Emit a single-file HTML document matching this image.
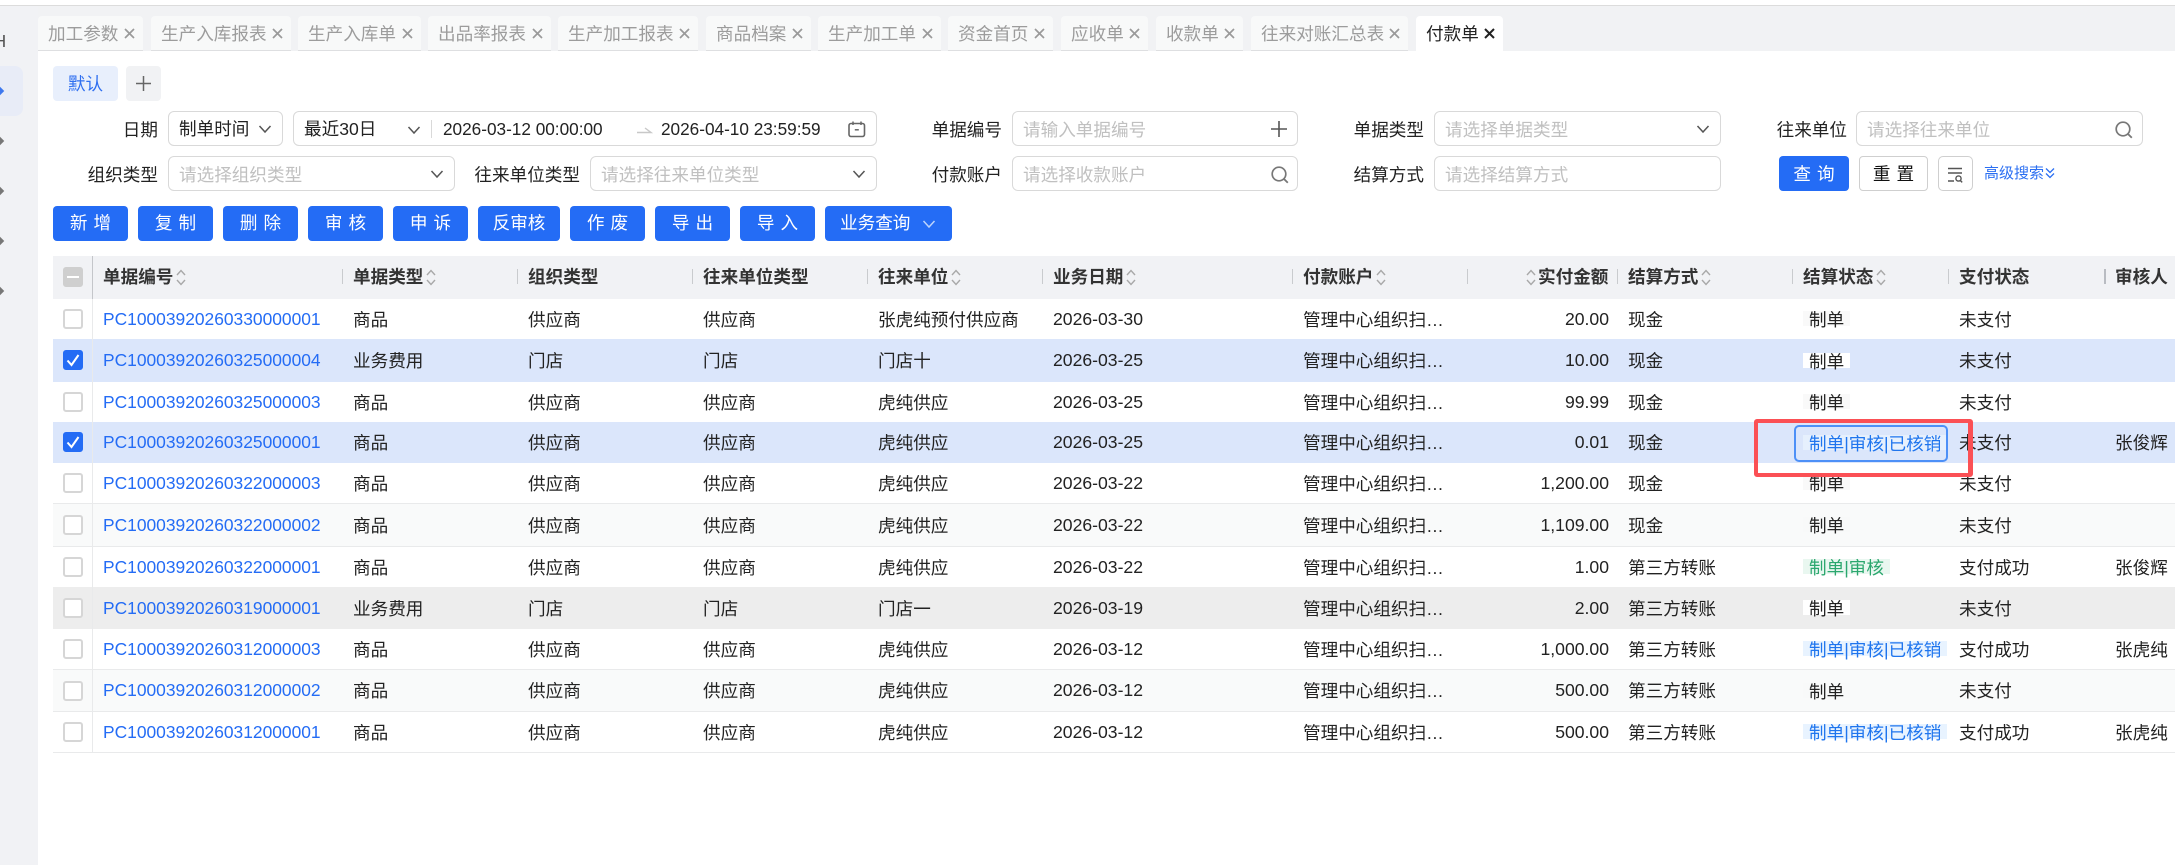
<!DOCTYPE html>
<html lang="zh-CN"><head><meta charset="utf-8"><title>付款单</title>
<style>
*{box-sizing:border-box;margin:0;padding:0}
html,body{width:2175px;height:865px;overflow:hidden;background:#fff}
body{position:relative;font-family:"Liberation Sans","Noto Sans CJK SC",sans-serif;font-size:17.6px;color:#222}
.a{position:absolute;white-space:nowrap}
.tab{position:absolute;top:16px;height:35px;background:#f8f9f9;border-bottom:1px solid #dedfe1;border-radius:4px 4px 0 0;color:#9c9c9c;line-height:36px;padding-left:10px;white-space:nowrap}
.tab i{position:absolute;right:8px;top:12px;width:11px;height:11px}
.tab.on{background:#fff;color:#222;border:0}
.lb{position:absolute;text-align:right;height:35px;line-height:38px;white-space:nowrap}
.bx{position:absolute;height:35px;border:1px solid #d9d9d9;border-radius:6px;background:#fff;line-height:35px;padding-left:10px;white-space:nowrap}
.ph{color:#c0c0c0;line-height:37px}
.bt{position:absolute;top:206px;height:35px;background:#246cf5;color:#fff;border-radius:4px;text-align:center;line-height:35px;letter-spacing:6px;padding-left:6px;white-space:nowrap}
.hd{position:absolute;left:53px;top:256px;width:2122px;height:43px;background:#f1f2f5}
.h{position:absolute;top:256px;height:43px;line-height:42px;font-weight:bold;color:#333;white-space:nowrap}
.d{position:absolute;top:269px;width:1px;height:15px;background:#c9cbce}
.r{position:absolute;left:53px;width:2122px;border-bottom:1px solid #e9eaeb;background:#fff}
.r span{position:absolute;top:0;height:100%;white-space:nowrap;display:flex;align-items:center}
.sel{background:#dbe6fb;border-bottom:0}
.alt{background:#f9fafa}
.hov{background:#ededed;border-bottom:0}
.c1{left:50px;color:#246cf5;font-size:17.4px}
.c2{left:300px}.c3{left:475px}.c4{left:650px}.c5{left:825px}.c6{left:1000px}.c7{left:1250px}
.c8{right:566px;text-align:right}
.c9{left:1575px}.c11{left:1906px}.c12{left:2062px}
.r .tg{position:absolute;left:1750px;top:50%;height:15px;margin-top:-8px;padding:0 6px;background:#f9f9f9;line-height:18px;align-items:flex-start}
.r.sel .tg,.r.hov .tg{background:#fff}
.r.alt .tg{background:#f8f9f9}
.r .tb,.r.sel .tb{background:#e8f3ff;color:#1f75ee}
.r.sel .tb{background:#e6f0fd}
.r .tv{background:#e9f7f0;color:#2ba76e}
.cb{position:absolute;left:10px;width:20px;height:20px;border:2px solid #d6d6d6;border-radius:3px;background:#fff}
.cb.on{background:#246cf5;border-color:#246cf5}
.cb svg{position:absolute;left:0;top:0}
svg{display:block}
</style></head><body>
<svg width="0" height="0" style="position:absolute"><defs>
<symbol id="sort" viewBox="0 0 10 17"><path d="M1 6L5 1.500 9 6M1 11L5 15.500 9 11" fill="none" stroke="#a8a8a8" stroke-width="1.400"/></symbol>
<symbol id="chev" viewBox="0 0 14 10"><path d="M1.500 2L7 8 12.500 2" fill="none" stroke="#555" stroke-width="1.500"/></symbol>
<symbol id="mag" viewBox="0 0 20 22"><circle cx="9" cy="10" r="6.800" fill="none" stroke="#777" stroke-width="1.700"/><path d="M14 15l3.800 3.800" stroke="#777" stroke-width="1.800"/></symbol>
<symbol id="x" viewBox="0 0 11 11"><path d="M1 1L10 10M10 1L1 10" stroke="#9a9a9a" stroke-width="1.700"/></symbol>
<symbol id="xk" viewBox="0 0 11 11"><path d="M1 1L10 10M10 1L1 10" stroke="#222" stroke-width="2"/></symbol>
<symbol id="ck" viewBox="0 0 16 16"><path d="M2.500 8.500L6.500 13 13.500 3" fill="none" stroke="#fff" stroke-width="2"/></symbol>
</defs></svg>

<!-- page chrome -->
<div class="a" style="left:0;top:0;width:2175px;height:5px;background:#fff"></div>
<div class="a" style="left:0;top:5px;width:2175px;height:46px;background:#f1f2f4;border-top:1px solid #dcdcdc"></div>
<div class="a" style="left:0;top:5px;width:38px;height:860px;background:#f1f2f5;border-top:1px solid #dcdcdc"></div>
<div class="a" style="left:0;top:66px;width:23px;height:50px;background:#e8ecf7;border-radius:0 8px 8px 0"></div>
<div class="a" style="left:-6.500px;top:30px;font-size:17.6px;line-height:22px;color:#555">H</div>
<div class="a" style="left:-3px;top:88px;width:6px;height:6px;background:#3e78ee;transform:rotate(45deg)"></div>
<div class="a" style="left:-3px;top:138px;width:6px;height:6px;background:#777;transform:rotate(45deg)"></div>
<div class="a" style="left:-3px;top:188px;width:6px;height:6px;background:#777;transform:rotate(45deg)"></div>
<div class="a" style="left:-3px;top:238px;width:6px;height:6px;background:#777;transform:rotate(45deg)"></div>
<div class="a" style="left:-3px;top:288px;width:6px;height:6px;background:#777;transform:rotate(45deg)"></div>

<!-- tabs -->
<div class="tab" style="left:38px;width:105px">加工参数<i><svg width="11" height="11"><use href="#x"/></svg></i></div>
<div class="tab" style="left:151px;width:140px">生产入库报表<i><svg width="11" height="11"><use href="#x"/></svg></i></div>
<div class="tab" style="left:298px;width:123px">生产入库单<i><svg width="11" height="11"><use href="#x"/></svg></i></div>
<div class="tab" style="left:428px;width:123px">出品率报表<i><svg width="11" height="11"><use href="#x"/></svg></i></div>
<div class="tab" style="left:558px;width:140px">生产加工报表<i><svg width="11" height="11"><use href="#x"/></svg></i></div>
<div class="tab" style="left:706px;width:105px">商品档案<i><svg width="11" height="11"><use href="#x"/></svg></i></div>
<div class="tab" style="left:818px;width:123px">生产加工单<i><svg width="11" height="11"><use href="#x"/></svg></i></div>
<div class="tab" style="left:948px;width:105px">资金首页<i><svg width="11" height="11"><use href="#x"/></svg></i></div>
<div class="tab" style="left:1061px;width:87px">应收单<i><svg width="11" height="11"><use href="#x"/></svg></i></div>
<div class="tab" style="left:1156px;width:87px">收款单<i><svg width="11" height="11"><use href="#x"/></svg></i></div>
<div class="tab" style="left:1251px;width:157px">往来对账汇总表<i><svg width="11" height="11"><use href="#x"/></svg></i></div>
<div class="tab on" style="left:1416px;width:87px;height:35px">付款单<i><svg width="11" height="11"><use href="#xk"/></svg></i></div>

<!-- view tabs -->
<div class="a" style="left:53px;top:66px;width:65px;height:35px;background:#e8effc;border-radius:4px;color:#2f6ff0;text-align:center;line-height:37px">默认</div>
<div class="a" style="left:126px;top:66px;width:35px;height:35px;background:#f1f2f4;border-radius:4px"><svg width="35" height="35"><path d="M17.500 10v15M10 17.500h15" stroke="#666" stroke-width="1.500"/></svg></div>

<!-- filter row 1 -->
<div class="lb" style="left:58px;top:111px;width:100px">日期</div>
<div class="bx" style="left:168px;top:111px;width:115px">制单时间<svg class="a" style="left:89px;top:12px" width="14" height="10"><use href="#chev"/></svg></div>
<div class="bx" style="left:293px;top:111px;width:584px">最近30日
<svg class="a" style="left:113px;top:13px" width="14" height="10"><use href="#chev"/></svg>
<div class="a" style="left:137px;top:8px;width:1px;height:18px;background:#d9d9d9"></div>
<div class="a" style="left:149px;top:0;font-size:17.200px">2026-03-12 00:00:00</div>
<svg class="a" style="left:343px;top:13px" width="16" height="10"><path d="M0 7.500h14L8 3" fill="none" stroke="#c8c8c8" stroke-width="1.400"/></svg>
<div class="a" style="left:367px;top:0;font-size:17.200px">2026-04-10 23:59:59</div>
<svg class="a" style="left:554px;top:8px" width="18" height="20"><path d="M5 1.500v3.500M13 1.500v3.500" stroke="#666" stroke-width="1.500"/><rect x="1" y="3.500" width="15.500" height="13" rx="2" fill="none" stroke="#666" stroke-width="1.600"/><path d="M6.800 9.800h4" stroke="#666" stroke-width="1.500"/></svg>
</div>
<div class="lb" style="left:902px;top:111px;width:100px">单据编号</div>
<div class="bx ph" style="left:1012px;top:111px;width:286px">请输入单据编号<svg class="a" style="left:257px;top:8px" width="18" height="18"><path d="M9 1v16M1 9h16" stroke="#555" stroke-width="1.600"/></svg></div>
<div class="lb" style="left:1324px;top:111px;width:100px">单据类型</div>
<div class="bx ph" style="left:1434px;top:111px;width:287px">请选择单据类型<svg class="a" style="left:261px;top:12px" width="14" height="10"><use href="#chev"/></svg></div>
<div class="lb" style="left:1747px;top:111px;width:100px">往来单位</div>
<div class="bx ph" style="left:1856px;top:111px;width:287px">请选择往来单位<svg class="a" style="left:257px;top:7px" width="20" height="22"><use href="#mag"/></svg></div>

<!-- filter row 2 -->
<div class="lb" style="left:58px;top:156px;width:100px">组织类型</div>
<div class="bx ph" style="left:168px;top:156px;width:287px">请选择组织类型<svg class="a" style="left:261px;top:12px" width="14" height="10"><use href="#chev"/></svg></div>
<div class="lb" style="left:450px;top:156px;width:130px">往来单位类型</div>
<div class="bx ph" style="left:590px;top:156px;width:287px">请选择往来单位类型<svg class="a" style="left:261px;top:12px" width="14" height="10"><use href="#chev"/></svg></div>
<div class="lb" style="left:902px;top:156px;width:100px">付款账户</div>
<div class="bx ph" style="left:1012px;top:156px;width:286px">请选择收款账户<svg class="a" style="left:257px;top:7px" width="20" height="22"><use href="#mag"/></svg></div>
<div class="lb" style="left:1324px;top:156px;width:100px">结算方式</div>
<div class="bx ph" style="left:1434px;top:156px;width:287px">请选择结算方式</div>
<div class="bt" style="left:1779px;top:156px;width:70px;line-height:37px">查询</div>
<div class="bt" style="left:1859px;top:156px;width:69px;background:#fff;color:#111;border:1px solid #cfcfcf;line-height:35px">重置</div>
<div class="a" style="left:1938px;top:156px;width:35px;height:35px;border:1px solid #cfcfcf;border-radius:5px;background:#fff"><svg width="33" height="33"><path d="M9 11.500h14M9 16h14M9 24h6" stroke="#555" stroke-width="1.400"/><circle cx="19.500" cy="21.500" r="2.600" fill="none" stroke="#555" stroke-width="1.400"/><path d="M21.300 23.500l1.900 1.900" stroke="#555" stroke-width="1.400"/></svg></div>
<div class="a" style="left:1984px;top:156px;height:35px;line-height:36px;font-size:15px;color:#2b6ff2">高级搜索</div>
<svg class="a" style="left:2045px;top:167px" width="10" height="13"><path d="M1 1.500L5 5.500 9 1.500M1 6.500L5 10.500 9 6.500" fill="none" stroke="#2b6ff2" stroke-width="1.300"/></svg>

<!-- action buttons -->
<div class="bt" style="left:53px;width:75px">新增</div>
<div class="bt" style="left:138px;width:75px">复制</div>
<div class="bt" style="left:223px;width:75px">删除</div>
<div class="bt" style="left:308px;width:75px">审核</div>
<div class="bt" style="left:393px;width:75px">申诉</div>
<div class="bt" style="left:478px;width:82px;letter-spacing:0;padding:0">反审核</div>
<div class="bt" style="left:570px;width:75px">作废</div>
<div class="bt" style="left:655px;width:75px">导出</div>
<div class="bt" style="left:740px;width:75px">导入</div>
<div class="bt" style="left:825px;width:127px;letter-spacing:0;padding:0 0 0 15px;text-align:left">业务查询<svg class="a" style="left:97px;top:13px" width="14" height="10"><path d="M1.500 2L7 8 12.500 2" fill="none" stroke="#bcd3fb" stroke-width="1.500"/></svg></div>

<!-- table header -->
<div class="hd"></div>
<div class="cb" style="left:63px;top:267px;background:#cfcfcf;border-color:#cfcfcf"><div class="a" style="left:2px;top:7px;width:12px;height:2px;background:#fff"></div></div>
<div class="h" style="left:103px">单据编号</div><svg class="a" style="left:176px;top:269px" width="10" height="17"><use href="#sort"/></svg>
<div class="d" style="left:342px"></div>
<div class="h" style="left:353px">单据类型</div><svg class="a" style="left:426px;top:269px" width="10" height="17"><use href="#sort"/></svg>
<div class="d" style="left:517px"></div>
<div class="h" style="left:528px">组织类型</div>
<div class="d" style="left:692px"></div>
<div class="h" style="left:703px">往来单位类型</div>
<div class="d" style="left:867px"></div>
<div class="h" style="left:878px">往来单位</div><svg class="a" style="left:951px;top:269px" width="10" height="17"><use href="#sort"/></svg>
<div class="d" style="left:1042px"></div>
<div class="h" style="left:1053px">业务日期</div><svg class="a" style="left:1126px;top:269px" width="10" height="17"><use href="#sort"/></svg>
<div class="d" style="left:1292px"></div>
<div class="h" style="left:1303px">付款账户</div><svg class="a" style="left:1376px;top:269px" width="10" height="17"><use href="#sort"/></svg>
<div class="d" style="left:1467px"></div>
<svg class="a" style="left:1526px;top:269px" width="10" height="17"><use href="#sort"/></svg><div class="h" style="left:1538px">实付金额</div>
<div class="d" style="left:1617px"></div>
<div class="h" style="left:1628px">结算方式</div><svg class="a" style="left:1701px;top:269px" width="10" height="17"><use href="#sort"/></svg>
<div class="d" style="left:1792px"></div>
<div class="h" style="left:1803px">结算状态</div><svg class="a" style="left:1876px;top:269px" width="10" height="17"><use href="#sort"/></svg>
<div class="d" style="left:1948px"></div>
<div class="h" style="left:1959px">支付状态</div>
<div class="d" style="left:2104px;width:2px;background:#b9bcc2"></div>
<div class="h" style="left:2115px">审核人</div>

<!-- rows -->
<div class="r" style="top:299px;height:40px;border-bottom:0"><i class="cb" style="top:10px"></i><span class="c1">PC10003920260330000001</span><span class="c2">商品</span><span class="c3">供应商</span><span class="c4">供应商</span><span class="c5">张虎纯预付供应商</span><span class="c6">2026-03-30</span><span class="c7">管理中心组织扫…</span><span class="c8">20.00</span><span class="c9">现金</span><span class="tg">制单</span><span class="c11">未支付</span></div>
<div class="r sel" style="top:339px;height:43px"><i class="cb on" style="top:11px"><svg width="16" height="16"><use href="#ck"/></svg></i><span class="c1">PC10003920260325000004</span><span class="c2">业务费用</span><span class="c3">门店</span><span class="c4">门店</span><span class="c5">门店十</span><span class="c6">2026-03-25</span><span class="c7">管理中心组织扫…</span><span class="c8">10.00</span><span class="c9">现金</span><span class="tg">制单</span><span class="c11">未支付</span></div>
<div class="r" style="top:382px;height:40px;border-bottom:0"><i class="cb" style="top:10px"></i><span class="c1">PC10003920260325000003</span><span class="c2">商品</span><span class="c3">供应商</span><span class="c4">供应商</span><span class="c5">虎纯供应</span><span class="c6">2026-03-25</span><span class="c7">管理中心组织扫…</span><span class="c8">99.99</span><span class="c9">现金</span><span class="tg">制单</span><span class="c11">未支付</span></div>
<div class="r sel" style="top:422px;height:41px"><i class="cb on" style="top:10px"><svg width="16" height="16"><use href="#ck"/></svg></i><span class="c1">PC10003920260325000001</span><span class="c2">商品</span><span class="c3">供应商</span><span class="c4">供应商</span><span class="c5">虎纯供应</span><span class="c6">2026-03-25</span><span class="c7">管理中心组织扫…</span><span class="c8">0.01</span><span class="c9">现金</span><span class="tg tb">制单|审核|已核销</span><span class="c11">未支付</span><span class="c12">张俊辉</span></div>
<div class="r" style="top:463px;height:41px"><i class="cb" style="top:10px"></i><span class="c1">PC10003920260322000003</span><span class="c2">商品</span><span class="c3">供应商</span><span class="c4">供应商</span><span class="c5">虎纯供应</span><span class="c6">2026-03-22</span><span class="c7">管理中心组织扫…</span><span class="c8">1,200.00</span><span class="c9">现金</span><span class="tg">制单</span><span class="c11">未支付</span></div>
<div class="r alt" style="top:504px;height:43px"><i class="cb" style="top:11px"></i><span class="c1">PC10003920260322000002</span><span class="c2">商品</span><span class="c3">供应商</span><span class="c4">供应商</span><span class="c5">虎纯供应</span><span class="c6">2026-03-22</span><span class="c7">管理中心组织扫…</span><span class="c8">1,109.00</span><span class="c9">现金</span><span class="tg">制单</span><span class="c11">未支付</span></div>
<div class="r" style="top:547px;height:40px;border-bottom:0"><i class="cb" style="top:10px"></i><span class="c1">PC10003920260322000001</span><span class="c2">商品</span><span class="c3">供应商</span><span class="c4">供应商</span><span class="c5">虎纯供应</span><span class="c6">2026-03-22</span><span class="c7">管理中心组织扫…</span><span class="c8">1.00</span><span class="c9">第三方转账</span><span class="tg tv">制单|审核</span><span class="c11">支付成功</span><span class="c12">张俊辉</span></div>
<div class="r hov" style="top:587px;height:42px"><i class="cb" style="top:11px"></i><span class="c1">PC10003920260319000001</span><span class="c2">业务费用</span><span class="c3">门店</span><span class="c4">门店</span><span class="c5">门店一</span><span class="c6">2026-03-19</span><span class="c7">管理中心组织扫…</span><span class="c8">2.00</span><span class="c9">第三方转账</span><span class="tg">制单</span><span class="c11">未支付</span></div>
<div class="r" style="top:629px;height:41px"><i class="cb" style="top:10px"></i><span class="c1">PC10003920260312000003</span><span class="c2">商品</span><span class="c3">供应商</span><span class="c4">供应商</span><span class="c5">虎纯供应</span><span class="c6">2026-03-12</span><span class="c7">管理中心组织扫…</span><span class="c8">1,000.00</span><span class="c9">第三方转账</span><span class="tg tb">制单|审核|已核销</span><span class="c11">支付成功</span><span class="c12">张虎纯</span></div>
<div class="r alt" style="top:670px;height:42px"><i class="cb" style="top:11px"></i><span class="c1">PC10003920260312000002</span><span class="c2">商品</span><span class="c3">供应商</span><span class="c4">供应商</span><span class="c5">虎纯供应</span><span class="c6">2026-03-12</span><span class="c7">管理中心组织扫…</span><span class="c8">500.00</span><span class="c9">第三方转账</span><span class="tg">制单</span><span class="c11">未支付</span></div>
<div class="r" style="top:712px;height:41px"><i class="cb" style="top:10px"></i><span class="c1">PC10003920260312000001</span><span class="c2">商品</span><span class="c3">供应商</span><span class="c4">供应商</span><span class="c5">虎纯供应</span><span class="c6">2026-03-12</span><span class="c7">管理中心组织扫…</span><span class="c8">500.00</span><span class="c9">第三方转账</span><span class="tg tb">制单|审核|已核销</span><span class="c11">支付成功</span><span class="c12">张虎纯</span></div>

<!-- column divider -->
<div class="a" style="left:92px;top:256px;width:1px;height:43px;background:#c4c6ca"></div>
<div class="a" style="left:92px;top:299px;width:1px;height:454px;background:#e9eaeb"></div>

<!-- focus + annotation -->
<div class="a" style="left:1794px;top:425px;width:154px;height:37px;border:2px solid #4d90f7;border-radius:5px"></div>
<div class="a" style="left:1754px;top:419px;width:219px;height:58px;border:solid #fb5055;border-width:4px 5px 4px 4px;border-radius:3px"></div>
</body></html>
